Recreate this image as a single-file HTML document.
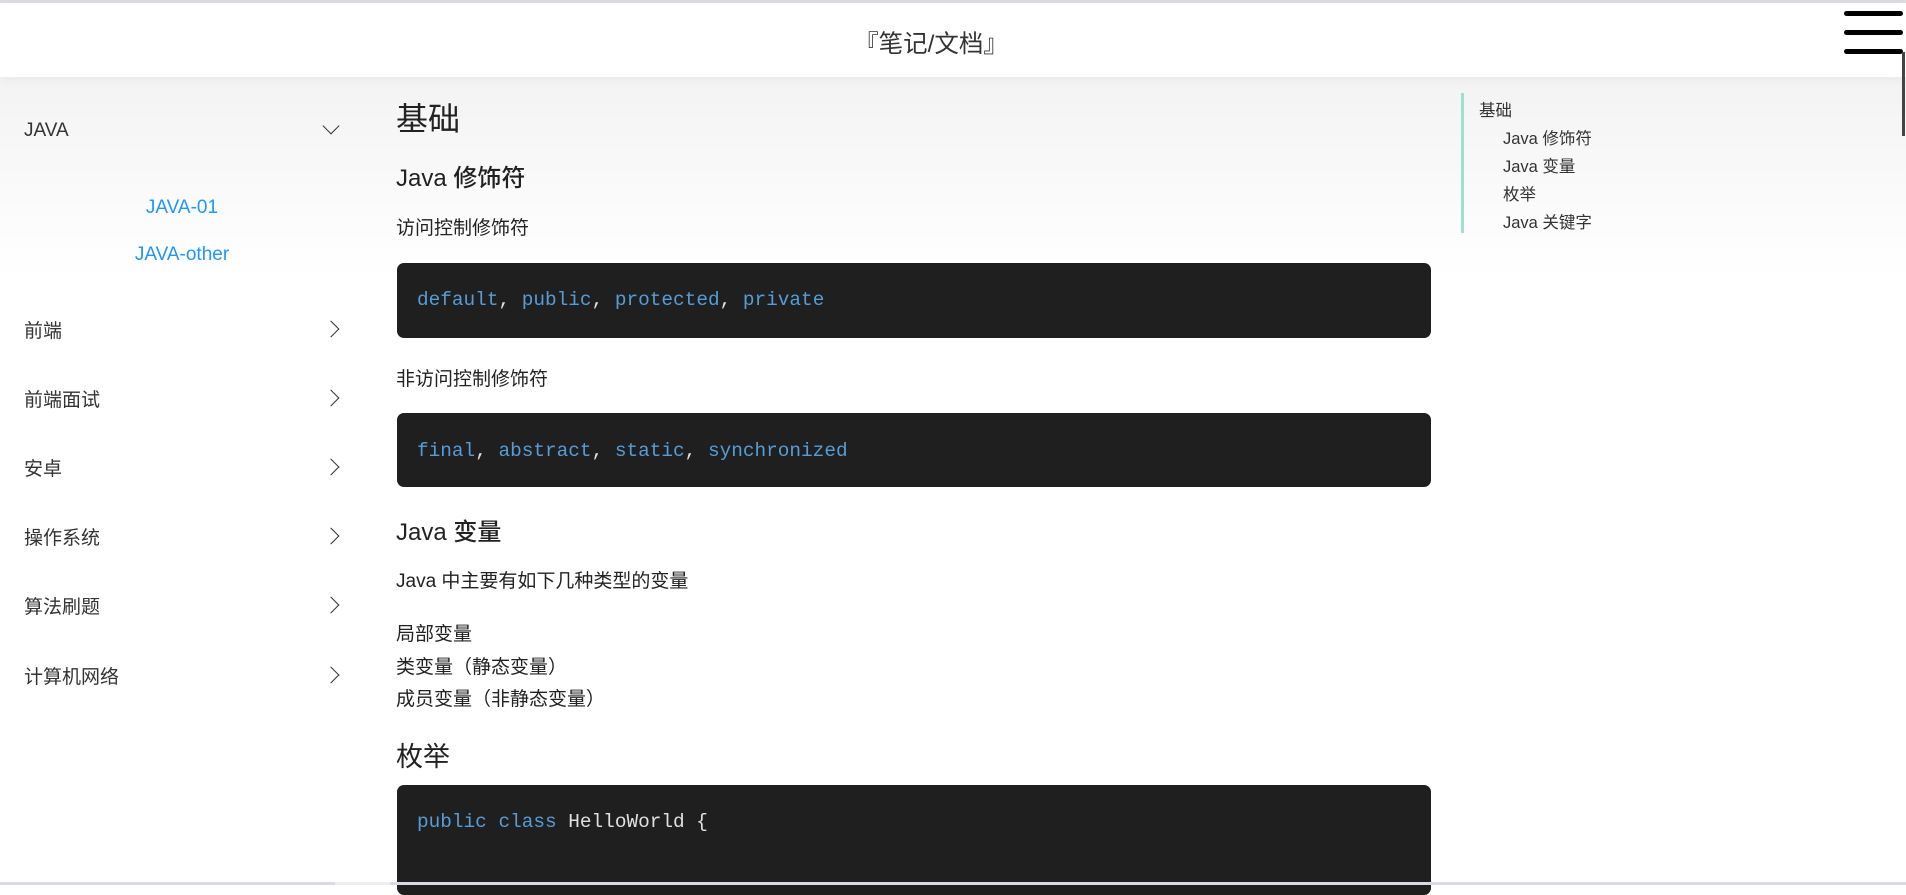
<!DOCTYPE html>
<html><head><meta charset="utf-8"><style>
*{margin:0;padding:0;box-sizing:border-box}
body{width:1906px;height:885px;overflow:hidden;font-family:"Liberation Sans","Noto Sans CJK SC",sans-serif;color:#222;background:#fff;position:relative}
.topline{position:absolute;top:0;left:0;width:100%;height:3px;background:#dcdde1}
.header{position:absolute;top:3px;left:0;width:100%;height:74px;background:#fff;box-shadow:0 4px 12px rgba(0,0,0,0.04);z-index:2}
.title{position:absolute;left:0;width:1862px;top:22px;text-align:center;font-size:24.5px;color:#333}
.ham{position:absolute;left:1844px;width:59px;height:5px;background:#000;border-radius:3px}
.bg{position:absolute;top:77px;left:0;width:100%;height:200px;background:linear-gradient(#f3f3f3,#fff)}
.side{position:absolute;left:24px;font-size:19px;color:#333}
.chev{position:absolute;left:325px;width:12px;height:12px;border-right:1.6px solid #333;border-bottom:1.6px solid #333}
.sub{position:absolute;width:364px;left:0;text-align:center;font-size:19px;color:#2196f3}
.c{position:absolute;left:396px}
.code{position:absolute;left:397px;width:1034px;background:#1f1f1f;border-radius:7px}
.code span{position:absolute;left:20px;font-family:"Liberation Mono",monospace;font-size:19.4px;color:#e0e0e0}
.k{color:#569cd6;font-weight:normal}
.toc{position:absolute;left:1461px;top:93px;width:3px;height:140px;background:#9ee0d0}
.t{position:absolute;font-size:16.5px;color:#333}
</style></head><body>
<div class="bg"></div>
<div class="topline"></div>
<div class="header"><div class="title">『笔记/文档』</div></div>
<div class="ham" style="top:11px;z-index:3"></div>
<div class="ham" style="top:30px;z-index:3"></div>
<div class="ham" style="top:49px;z-index:3"></div>
<div style="position:absolute;left:1902px;top:52px;width:3px;height:84px;background:#444;z-index:3"></div>

<div class="side" style="top:120px">JAVA</div><div class="chev" style="top:120px;transform:rotate(45deg)"></div>
<div class="sub" style="top:197px">JAVA-01</div>
<div class="sub" style="top:244px">JAVA-other</div>
<div class="side" style="top:316px">前端</div><div class="chev" style="top:323px;transform:rotate(-45deg)"></div>
<div class="side" style="top:385px">前端面试</div><div class="chev" style="top:392px;transform:rotate(-45deg)"></div>
<div class="side" style="top:454px">安卓</div><div class="chev" style="top:461px;transform:rotate(-45deg)"></div>
<div class="side" style="top:523px">操作系统</div><div class="chev" style="top:530px;transform:rotate(-45deg)"></div>
<div class="side" style="top:592px">算法刷题</div><div class="chev" style="top:599px;transform:rotate(-45deg)"></div>
<div class="side" style="top:662px">计算机网络</div><div class="chev" style="top:669px;transform:rotate(-45deg)"></div>

<div class="c" style="top:94px;font-size:32px">基础</div>
<div class="c" style="top:158px;font-size:24px;font-weight:500">Java 修饰符</div>
<div class="c" style="top:213px;font-size:19px">访问控制修饰符</div>
<div class="code" style="top:263px;height:75px"><span style="top:26px"><b class="k">default</b>, <b class="k">public</b>, <b class="k">protected</b>, <b class="k">private</b></span></div>
<div class="c" style="top:364px;font-size:19px">非访问控制修饰符</div>
<div class="code" style="top:413px;height:74px"><span style="top:27px"><b class="k">final</b>, <b class="k">abstract</b>, <b class="k">static</b>, <b class="k">synchronized</b></span></div>
<div class="c" style="top:512px;font-size:24px;font-weight:500">Java 变量</div>
<div class="c" style="top:566px;font-size:19px">Java 中主要有如下几种类型的变量</div>
<div class="c" style="top:619px;font-size:19px">局部变量</div>
<div class="c" style="top:652px;font-size:19px">类变量（静态变量）</div>
<div class="c" style="top:684px;font-size:19px">成员变量（非静态变量）</div>
<div class="c" style="top:735px;font-size:27px">枚举</div>
<div class="code" style="top:785px;height:110px"><span style="top:26px"><b class="k">public class</b> HelloWorld {</span></div>

<div class="toc"></div>
<div class="t" style="left:1479px;top:97px">基础</div>
<div class="t" style="left:1503px;top:125px">Java 修饰符</div>
<div class="t" style="left:1503px;top:153px">Java 变量</div>
<div class="t" style="left:1503px;top:181px">枚举</div>
<div class="t" style="left:1503px;top:209px">Java 关键字</div>

<div style="position:absolute;left:0;top:882px;width:100%;height:3px;background:#dcd8ea;z-index:3"></div>
<div style="position:absolute;left:335px;top:882px;width:55px;height:3px;background:#eeedf5;z-index:3"></div>
</body></html>
